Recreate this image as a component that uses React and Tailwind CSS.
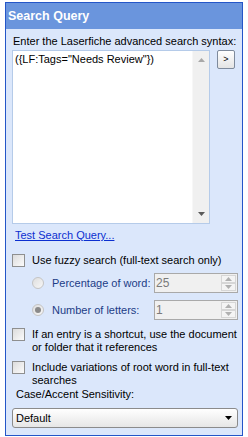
const UpTri = ({ c = "#9a9a9a" }) => (
  <svg width="7" height="4" viewBox="0 0 7 4"><path d="M3.5 0 L7 4 L0 4 Z" fill={c} /></svg>
);
const DownTri = ({ c = "#9a9a9a", w = 7, h = 4 }) => (
  <svg width={w} height={h} viewBox={`0 0 ${w} ${h}`}><path d={`M0 0 L${w} 0 L${w / 2} ${h} Z`} fill={c} /></svg>
);

function CheckBox() {
  return (
    <div className="w-[13px] h-[13px] shrink-0 border border-[#8e8f8f] bg-gradient-to-br from-[#dcdcdc] to-[#fbfbfb]" />
  );
}

function Radio({ checked }) {
  return (
    <div className="w-[12px] h-[12px] shrink-0 rounded-full border border-[#c4c4c4] bg-gradient-to-br from-[#dedede] to-[#f7f7f7] flex items-center justify-center">
      {checked && <div className="w-[6px] h-[6px] rounded-full bg-[#8a8a8a]" />}
    </div>
  );
}

function Spin({ value }) {
  return (
    <div className="ml-auto w-[84px] h-[20px] border border-[#a9a9a9] bg-[#f0f0f0] flex">
      <div className="flex-1 pl-[1px] pt-[2px] text-[#7a7a7a] text-[12px] leading-[15px]">{value}</div>
      <div className="w-[16px] flex flex-col py-[1px] pr-[1px]">
        <div className="flex-1 border border-[#d6d6d6] bg-[#f4f4f4] flex items-center justify-center"><UpTri c="#b0b0b0" /></div>
        <div className="flex-1 border border-[#d6d6d6] bg-[#f4f4f4] flex items-center justify-center"><DownTri c="#b0b0b0" /></div>
      </div>
    </div>
  );
}

export default function App() {
  return (
    <div className="w-[248px] h-[437px] bg-white pt-[2px] pl-[5px] font-['Liberation_Sans',Arial,sans-serif] text-[11px] leading-[13px] text-black">
      <div className="w-[238px] h-[434px] border border-[#2456c8] bg-[#dbe7fb] flex flex-col">
        <div className="h-[26px] shrink-0 bg-[#6a95dd] text-white font-bold text-[12.5px] pl-[2px] pt-[4px] leading-[18px]">
          Search Query
        </div>
        <div className="flex flex-col pl-[6px] pr-[4px]">
          <div className="mt-[6px] pl-[1px] whitespace-nowrap">Enter the Laserfiche advanced search syntax:</div>
          <div className="mt-[2px] flex items-start">
            <div className="w-[198px] h-[174px] border border-[#b5cbe9] bg-white flex">
              <div className="flex-1 pl-[2px] pt-[2px] text-[11px] leading-[13px] whitespace-nowrap">({"{"}LF:Tags="Needs Review"{"}"})</div>
              <div className="w-[17px] bg-[#f0f0f0] border-l border-[#f7f7f7] flex flex-col items-center justify-between py-[7px]">
                <UpTri c="#a8a8a8" />
                <DownTri c="#5a5a5a" />
              </div>
            </div>
            <div className="ml-[7px] w-[18px] h-[19px] rounded-[2px] border border-[#7e8a9c] bg-gradient-to-b from-[#ffffff] to-[#e4e4e4] flex items-center justify-center text-[9px] leading-[9px]">
              &gt;
            </div>
          </div>
          <div className="mt-[5px] pl-[3px]">
            <span className="text-[#0c2fd0] underline">Test Search Query...</span>
          </div>
          <div className="mt-[12px] flex items-start">
            <CheckBox />
            <span className="ml-[7px] whitespace-nowrap">Use fuzzy search (full-text search only)</span>
          </div>
          <div className="mt-[6px] h-[20px] flex items-center pl-[20px]">
            <Radio />
            <span className="ml-[8px] text-[#1c3c86] whitespace-nowrap">Percentage of word:</span>
            <Spin value="25" />
          </div>
          <div className="mt-[7px] h-[20px] flex items-center pl-[20px]">
            <Radio checked />
            <span className="ml-[8px] text-[#1c3c86] whitespace-nowrap">Number of letters:</span>
            <Spin value="1" />
          </div>
          <div className="mt-[8px] flex items-start">
            <CheckBox />
            <span className="ml-[7px] whitespace-nowrap">
              If an entry is a shortcut, use the document
              <br />
              or folder that it references
            </span>
          </div>
          <div className="mt-[7px] flex items-start">
            <CheckBox />
            <span className="ml-[7px] whitespace-nowrap">
              Include variations of root word in full-text
              <br />
              searches
            </span>
          </div>
          <div className="mt-[1px] pl-[4px]">Case/Accent Sensitivity:</div>
          <div className="mt-[7px] h-[20px] rounded-[3px] border border-[#8b8b8b] bg-gradient-to-b from-[#ffffff] to-[#e6e6e6] flex items-center pl-[3px] pr-[5px]">
            <span className="flex-1">Default</span>
            <DownTri c="#000000" w={7} h={4} />
          </div>
        </div>
      </div>
    </div>
  );
}
